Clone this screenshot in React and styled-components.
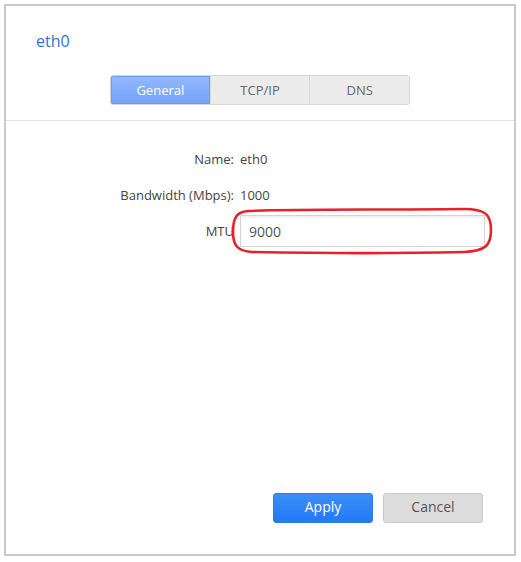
import React from 'react'
import styled, {createGlobalStyle} from 'styled-components'

const GlobalStyle = createGlobalStyle`
  html, body {
    margin: 0;
    padding: 0;
    background: #fff;
  }
  body {
    font-family: 'Open Sans', 'Noto Sans', Arial, sans-serif;
    font-size: 13px;
    color: #444;
  }
`

const Frame = styled.div`
  margin: 4px;
  width: 512px;
  height: 552px;
  box-sizing: border-box;
  border: 2px solid #c8c8c8;
  background: #fff;
  display: flex;
  flex-direction: column;
`

const Header = styled.div`
  padding: 24px 0 15px;
  border-bottom: 1px solid #e3e3e3;
`

const Title = styled.h1`
  margin: 0 0 0 30px;
  font-size: 16px;
  font-weight: 400;
  line-height: 22px;
  color: #3370d9;
`

const Tabs = styled.div`
  display: flex;
  width: 300px;
  margin: 23px auto 0;
  box-sizing: border-box;
  border: 1px solid #d6d6d6;
  border-radius: 3px;
  overflow: hidden;
`

const Tab = styled.div`
  flex: 1;
  height: 28px;
  display: flex;
  align-items: center;
  justify-content: center;
  font-size: 13px;
  color: ${p => (p.active ? '#fff' : '#666')};
  background: ${p =>
    p.active ? 'linear-gradient(#92b9ff, #75a2f8)' : '#ececec'};
  box-shadow: ${p => (p.active ? 'inset 0 0 0 1px #6f9bf0' : 'none')};
  & + & {
    border-left: 1px solid #d6d6d6;
  }
`

const Body = styled.div`
  flex: 1;
  display: flex;
  flex-direction: column;
  justify-content: space-between;
  padding: 20px 0 31px;
`

const Form = styled.div`
  display: grid;
  grid-template-columns: 228px 1fr;
  column-gap: 6px;
  align-items: center;
`

const Label = styled.div`
  text-align: right;
  height: 36px;
  line-height: 36px;
  color: #444;
`

const Value = styled.div`
  height: 36px;
  line-height: 36px;
  color: #444;
`

const InputWrap = styled.div`
  position: relative;
  width: 245px;
  padding: 2px 0;
`

const Input = styled.input`
  display: block;
  width: 245px;
  height: 32px;
  box-sizing: border-box;
  border: 1px solid #d4d4d4;
  box-shadow: inset 0 2px 2px rgba(0, 0, 0, 0.06);
  padding: 0 8px;
  font-family: inherit;
  font-size: 14px;
  color: #555;
  outline: none;
`

const Circle = styled.svg`
  position: absolute;
  left: -8px;
  top: -5px;
  width: 261px;
  height: 46px;
  pointer-events: none;
  overflow: visible;
`

const Actions = styled.div`
  display: flex;
  justify-content: flex-end;
  gap: 10px;
  padding-right: 31px;
`

const Button = styled.button`
  width: 100px;
  height: 30px;
  border-radius: 3px;
  font-family: inherit;
  font-size: 14px;
  line-height: 26px;
  padding: 0 0 2px;
  cursor: pointer;
  border: 1px solid ${p => (p.primary ? '#2a7bf0' : '#c9c9c9')};
  color: ${p => (p.primary ? '#fff' : '#555')};
  background: ${p =>
    p.primary ? 'linear-gradient(#3b8ff8, #2479f5)' : '#dcdcdc'};
`

export default function App() {
  return (
    <>
      <GlobalStyle />
      <Frame>
        <Header>
          <Title>eth0</Title>
          <Tabs>
            <Tab active>General</Tab>
            <Tab>TCP/IP</Tab>
            <Tab>DNS</Tab>
          </Tabs>
        </Header>
        <Body>
          <Form>
            <Label>Name:</Label>
            <Value>eth0</Value>
            <Label>Bandwidth (Mbps):</Label>
            <Value>1000</Value>
            <Label>MTU</Label>
            <InputWrap>
              <Input defaultValue="9000" />
              <Circle viewBox="0 0 261 46">
                <path
                  d="M16 3 C 60 1, 140 2, 232 1 C 254 1, 259 7, 259 22 C 259 37, 254 43, 232 44 C 150 46, 70 45, 20 44 C 5 43, 1 37, 1 24 C 1 9, 5 4, 16 3 Z"
                  fill="none"
                  stroke="#e8202a"
                  strokeWidth="2.6"
                />
              </Circle>
            </InputWrap>
          </Form>
          <Actions>
            <Button primary>Apply</Button>
            <Button>Cancel</Button>
          </Actions>
        </Body>
      </Frame>
    </>
  )
}
